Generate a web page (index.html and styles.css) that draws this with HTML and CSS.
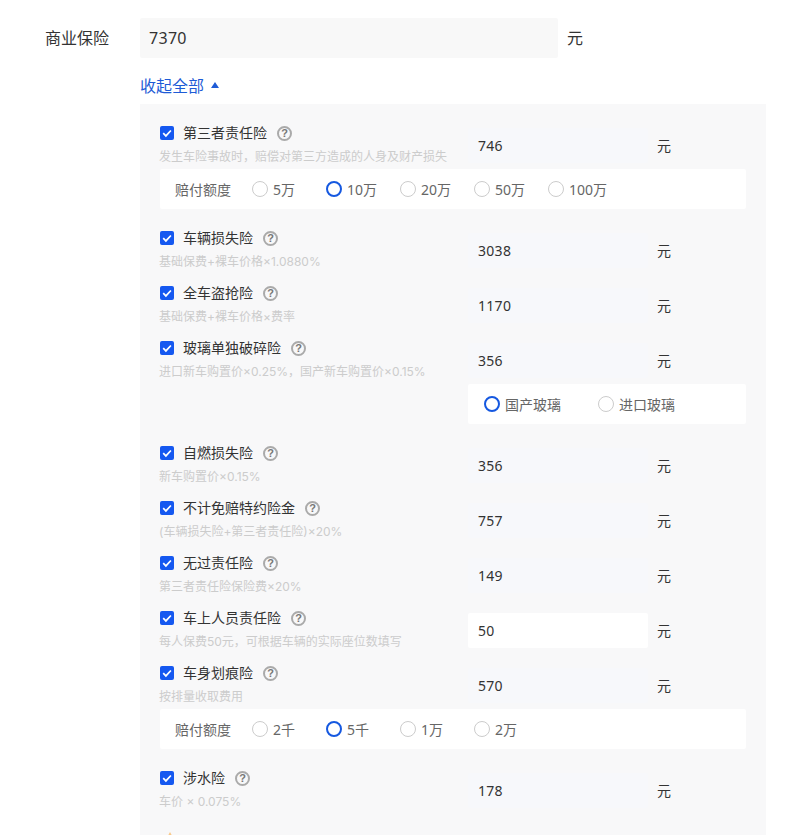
FILE: index.html
```html
<!DOCTYPE html>
<html lang="zh-CN">
<head>
<meta charset="utf-8">
<title>商业保险</title>
<link rel="stylesheet" href="styles.css">
</head>
<body>
<div class="page">
  <div class="top-row">
    <span class="top-label">商业保险</span>
    <div class="top-input">7370</div>
    <span class="top-unit">元</span>
  </div>
  <div class="toggle">收起全部<span class="caret"></span></div>
  <div class="panel">

    <div class="row">
      <div class="info">
        <div class="title"><span class="check"><svg viewBox="0 0 14 14"><path d="M3.2 7.2l2.7 2.7 5-5.4"/></svg></span><span class="name">第三者责任险</span><span class="help">?</span></div>
        <div class="desc">发生车险事故时，赔偿对第三方造成的人身及财产损失</div>
      </div>
      <div class="field">746</div><span class="unit">元</span>
    </div>
    <div class="options">
      <span class="opt-label">赔付额度</span>
      <span class="opt"><i class="radio"></i>5万</span>
      <span class="opt"><i class="radio on"></i>10万</span>
      <span class="opt"><i class="radio"></i>20万</span>
      <span class="opt"><i class="radio"></i>50万</span>
      <span class="opt"><i class="radio"></i>100万</span>
    </div>

    <div class="row">
      <div class="info">
        <div class="title"><span class="check"><svg viewBox="0 0 14 14"><path d="M3.2 7.2l2.7 2.7 5-5.4"/></svg></span><span class="name">车辆损失险</span><span class="help">?</span></div>
        <div class="desc">基础保费+裸车价格×1.0880%</div>
      </div>
      <div class="field">3038</div><span class="unit">元</span>
    </div>

    <div class="row">
      <div class="info">
        <div class="title"><span class="check"><svg viewBox="0 0 14 14"><path d="M3.2 7.2l2.7 2.7 5-5.4"/></svg></span><span class="name">全车盗抢险</span><span class="help">?</span></div>
        <div class="desc">基础保费+裸车价格×费率</div>
      </div>
      <div class="field">1170</div><span class="unit">元</span>
    </div>

    <div class="row">
      <div class="info">
        <div class="title"><span class="check"><svg viewBox="0 0 14 14"><path d="M3.2 7.2l2.7 2.7 5-5.4"/></svg></span><span class="name">玻璃单独破碎险</span><span class="help">?</span></div>
        <div class="desc">进口新车购置价×0.25%，国产新车购置价×0.15%</div>
      </div>
      <div class="field">356</div><span class="unit">元</span>
    </div>
    <div class="options options-right">
      <span class="opt opt-wide"><i class="radio on"></i>国产玻璃</span>
      <span class="opt opt-wide"><i class="radio"></i>进口玻璃</span>
    </div>

    <div class="row">
      <div class="info">
        <div class="title"><span class="check"><svg viewBox="0 0 14 14"><path d="M3.2 7.2l2.7 2.7 5-5.4"/></svg></span><span class="name">自燃损失险</span><span class="help">?</span></div>
        <div class="desc">新车购置价×0.15%</div>
      </div>
      <div class="field">356</div><span class="unit">元</span>
    </div>

    <div class="row">
      <div class="info">
        <div class="title"><span class="check"><svg viewBox="0 0 14 14"><path d="M3.2 7.2l2.7 2.7 5-5.4"/></svg></span><span class="name">不计免赔特约险金</span><span class="help">?</span></div>
        <div class="desc">(车辆损失险+第三者责任险)×20%</div>
      </div>
      <div class="field">757</div><span class="unit">元</span>
    </div>

    <div class="row">
      <div class="info">
        <div class="title"><span class="check"><svg viewBox="0 0 14 14"><path d="M3.2 7.2l2.7 2.7 5-5.4"/></svg></span><span class="name">无过责任险</span><span class="help">?</span></div>
        <div class="desc">第三者责任险保险费×20%</div>
      </div>
      <div class="field">149</div><span class="unit">元</span>
    </div>

    <div class="row">
      <div class="info">
        <div class="title"><span class="check"><svg viewBox="0 0 14 14"><path d="M3.2 7.2l2.7 2.7 5-5.4"/></svg></span><span class="name">车上人员责任险</span><span class="help">?</span></div>
        <div class="desc">每人保费50元，可根据车辆的实际座位数填写</div>
      </div>
      <div class="field field-white">50</div><span class="unit">元</span>
    </div>

    <div class="row">
      <div class="info">
        <div class="title"><span class="check"><svg viewBox="0 0 14 14"><path d="M3.2 7.2l2.7 2.7 5-5.4"/></svg></span><span class="name">车身划痕险</span><span class="help">?</span></div>
        <div class="desc">按排量收取费用</div>
      </div>
      <div class="field">570</div><span class="unit">元</span>
    </div>
    <div class="options">
      <span class="opt-label">赔付额度</span>
      <span class="opt"><i class="radio"></i>2千</span>
      <span class="opt"><i class="radio on"></i>5千</span>
      <span class="opt"><i class="radio"></i>1万</span>
      <span class="opt"><i class="radio"></i>2万</span>
    </div>

    <div class="row">
      <div class="info">
        <div class="title"><span class="check"><svg viewBox="0 0 14 14"><path d="M3.2 7.2l2.7 2.7 5-5.4"/></svg></span><span class="name">涉水险</span><span class="help">?</span></div>
        <div class="desc">车价 × 0.075%</div>
      </div>
      <div class="field">178</div><span class="unit">元</span>
    </div>

    <svg class="peek" viewBox="0 0 12 12"><path d="M6 0l6 11H0z"/></svg>
  </div>
</div>
</body>
</html>
```
FILE: styles.css
```css
* { box-sizing: border-box; }
html, body { margin: 0; height: 835px; overflow: hidden; background: #fff; }
body { font-family: "Noto Sans", "Noto Sans CJK SC", sans-serif; color: #333; }
.page { padding: 18px 0 0 45px; }
.top-row { display: flex; align-items: center; height: 40px; }
.top-label { width: 95px; padding-bottom: 2px; font-size: 16px; color: #333; }
.top-input { width: 418px; height: 40px; line-height: 40px; padding-left: 9px; font-size: 16px; letter-spacing: 0.3px; background: #f8f8f8; border-radius: 2px; color: #333; }
.top-unit { margin-left: 9px; padding-bottom: 2px; font-size: 16px; }
.toggle { display: flex; align-items: center; height: 20px; margin: 17px 0 9px 95px; font-size: 16px; color: #1e5bd6; }
.caret { width: 0; height: 0; margin-left: 7px; border: 4px solid transparent; border-top: 0; border-bottom: 6px solid #1e5bd6; }
.panel { width: 626px; height: 740px; margin-left: 95px; padding: 19px 20px 0; background: #f8f8f9; overflow: hidden; }
.row { display: flex; height: 40px; margin-bottom: 15px; }
.info { width: 308px; }
.title { display: flex; align-items: center; height: 20px; }
.check { display: flex; width: 14px; height: 14px; background: #1558f0; border-radius: 2px; }
.check svg { width: 14px; height: 14px; fill: none; stroke: #fff; stroke-width: 1.7; }
.name { margin-left: 9px; font-size: 14px; line-height: 20px; color: #333; }
.help { display: flex; align-items: center; justify-content: center; width: 15px; height: 15px; margin-left: 10px; border: 2px solid #aaa; border-radius: 50%; font: bold 11px/1 "Liberation Sans", sans-serif; color: #777; }
.desc { margin-top: 6px; margin-left: -1px; font-family: Inter, "Noto Sans CJK SC", sans-serif; font-size: 12px; line-height: 16px; color: #ccc; white-space: nowrap; }
.field { width: 180px; height: 35px; margin-top: 5px; padding-left: 10px; font-size: 14px; letter-spacing: 0.3px; line-height: 35px; background: #f7f8fb; border-radius: 2px; color: #333; }
.field-white { background: #fff; }
.unit { margin: 5px 0 0 9px; font-size: 14px; line-height: 35px; color: #333; }
.options { display: flex; align-items: center; height: 40px; margin: -9px 0 19px; padding-left: 15px; background: #fff; border-radius: 2px; font-size: 14px; color: #666; }
.options-right { margin-left: 308px; padding-left: 16px; }
.opt-label { width: 77px; }
.opt { display: flex; align-items: center; width: 74px; }
.opt-wide { width: 114px; }
.radio { width: 16px; height: 16px; margin-right: 5px; border: 1px solid #ccc; border-radius: 50%; background: #fff; }
.radio.on { border: 2px solid #1558e0; }
.peek { display: block; width: 12px; height: 12px; margin: 24px 0 0 4px; fill: #f9c98a; }
```
